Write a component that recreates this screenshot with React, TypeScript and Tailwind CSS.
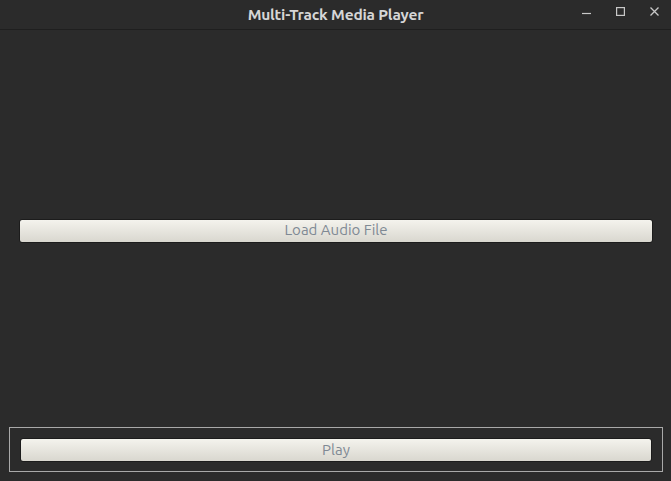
const btn =
  "w-full h-[24px] rounded-[3px] border border-[#1c1c1c] bg-gradient-to-b from-[#f4f3ed] to-[#d9d7cf] text-[15px] text-[#7f8994] flex items-center justify-center";

export default function App() {
  return (
    <div
      className="w-[671px] h-[481px] bg-[#2b2b2b] flex flex-col overflow-hidden"
      style={{ fontFamily: "Ubuntu, 'Open Sans', 'DejaVu Sans', sans-serif" }}
    >
      {/* title bar */}
      <div className="h-[30px] border-b border-[#1f1f1f] flex items-center relative shrink-0">
        <div className="flex-1 text-center text-[15.5px] font-bold text-[#d6d6d6] tracking-[-0.2px] pt-[1px]">
          Multi-Track Media Player
        </div>
        <div className="absolute right-0 top-[5px] h-[12px] flex items-center gap-[25px] pr-[12px] text-[#c8c8c8]">
          <svg width="9" height="12" viewBox="0 0 9 12">
            <path d="M0 8.5h9" stroke="currentColor" strokeWidth="1.2" />
          </svg>
          <svg width="9" height="12" viewBox="0 0 9 12">
            <rect x="0.6" y="2.6" width="7.8" height="7.8" fill="none" stroke="currentColor" strokeWidth="1.2" />
          </svg>
          <svg width="9" height="12" viewBox="0 0 9 12">
            <path d="M0.5 2.5l8 8M8.5 2.5l-8 8" stroke="currentColor" strokeWidth="1.3" />
          </svg>
        </div>
      </div>

      <div className="flex-1 flex items-center pl-[19px] pr-[18px] pt-[4px]">
        <button className={btn}>Load Audio File</button>
      </div>

      <div className="ml-[9px] mr-[8px] mb-[9px] border border-[#a9a9a9] pl-[10px] pr-[10px] pt-[10px] pb-[9px]">
        <button className={btn}>Play</button>
      </div>
    </div>
  );
}
